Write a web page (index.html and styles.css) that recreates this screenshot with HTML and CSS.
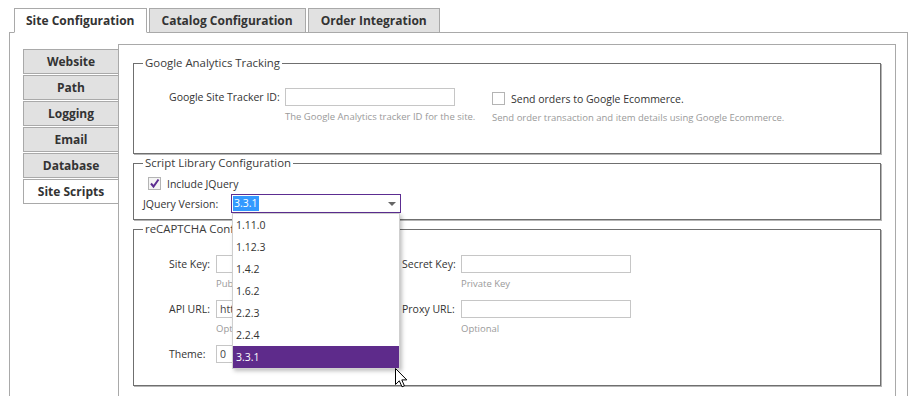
FILE: index.html
```html
<!DOCTYPE html>
<html lang="en">
<head>
    <meta charset="UTF-8">
    <title>Site Configuration</title>
    <link rel="stylesheet" href="styles.css">
</head>
<body>
    <div class="page">
        <div class="tabs">
            <div class="tab active">Site Configuration</div>
            <div class="tab">Catalog Configuration</div>
            <div class="tab">Order Integration</div>
        </div>
        <div class="panel">
            <div class="side-tabs">
                <div class="side-tab">Website</div>
                <div class="side-tab">Path</div>
                <div class="side-tab">Logging</div>
                <div class="side-tab">Email</div>
                <div class="side-tab">Database</div>
                <div class="side-tab active">Site Scripts</div>
            </div>
            <div class="content">
                <fieldset class="group group-ga">
                    <legend>Google Analytics Tracking</legend>
                    <div class="ga-grid">
                        <label class="field-label" for="tracker">Google Site Tracker ID:</label>
                        <div class="field">
                            <input type="text" id="tracker" class="text-input">
                            <div class="hint">The Google Analytics tracker ID for the site.</div>
                        </div>
                        <div class="field">
                            <div class="check-row"><span class="check"></span>Send orders to Google Ecommerce.</div>
                            <div class="hint hint-check">Send order transaction and item details using Google Ecommerce.</div>
                        </div>
                    </div>
                </fieldset>

                <fieldset class="group group-scripts">
                    <legend>Script Library Configuration</legend>
                    <div class="check-row include-row">
                        <span class="check checked">
                            <svg width="11" height="11" viewBox="0 0 11 11"><path d="M2 5.5 L4.5 8.5 L9.5 1.5" fill="none" stroke="#5c2d91" stroke-width="2"/></svg>
                        </span>Include JQuery
                    </div>
                    <div class="version-row">
                        <span class="version-label">JQuery Version:</span>
                        <div class="select-wrap">
                            <div class="select">
                                <span class="select-value">3.3.1</span>
                                <span class="select-arrow"></span>
                            </div>
                            <ul class="dropdown">
                                <li>1.11.0</li>
                                <li>1.12.3</li>
                                <li>1.4.2</li>
                                <li>1.6.2</li>
                                <li>2.2.3</li>
                                <li>2.2.4</li>
                                <li class="selected">3.3.1</li>
                            </ul>
                            <svg class="cursor" width="13" height="20" viewBox="0 0 13 20">
                                <path d="M0.5 0.5 L0.5 16.5 L4.3 12.8 L7 18.8 L9.4 17.8 L6.8 11.9 L11.8 11.9 Z" fill="#fff" stroke="#000" stroke-width="1" stroke-linejoin="round"/>
                            </svg>
                        </div>
                    </div>
                </fieldset>

                <fieldset class="group group-captcha">
                    <legend>reCAPTCHA Configuration</legend>
                    <div class="captcha-grid">
                        <label class="field-label" for="siteKey">Site Key:</label>
                        <div class="field">
                            <input type="text" id="siteKey" class="text-input">
                            <div class="hint">Public Key</div>
                        </div>
                        <label class="field-label" for="secretKey">Secret Key:</label>
                        <div class="field">
                            <input type="text" id="secretKey" class="text-input">
                            <div class="hint">Private Key</div>
                        </div>

                        <label class="field-label" for="apiUrl">API URL:</label>
                        <div class="field">
                            <input type="text" id="apiUrl" class="text-input" value="https://www.google.com/recaptcha/api.js">
                            <div class="hint">Optional</div>
                        </div>
                        <label class="field-label" for="proxyUrl">Proxy URL:</label>
                        <div class="field">
                            <input type="text" id="proxyUrl" class="text-input">
                            <div class="hint">Optional</div>
                        </div>

                        <label class="field-label" for="theme">Theme:</label>
                        <div class="field">
                            <input type="text" id="theme" class="text-input" value="0">
                        </div>
                    </div>
                </fieldset>
            </div>
        </div>
    </div>
</body>
</html>
```

FILE: styles.css
```css
body {
    margin: 0;
    font-family: "Open Sans", "Noto Sans", sans-serif;
    font-size: 11px;
    color: #333;
    background-color: #fff;
    overflow: hidden;
}
.page {
    padding: 8px 6px 0 9px;
}

/* top tabs */
.tabs {
    display: flex;
    gap: 2px;
    margin-left: 5px;
    margin-bottom: -1px;
    position: relative;
    z-index: 1;
}
.tab {
    height: 23px;
    line-height: 23px;
    padding: 0 12px;
    border: 1px solid #a9a9a9;
    background-color: #e1e1e1;
    font-weight: bold;
    font-size: 12px;
    color: #333;
}
.tab:first-child {
    padding: 0 11px;
}
.tab.active {
    background-color: #fff;
    border-bottom-color: #fff;
}

.panel {
    display: flex;
    height: 380px;
    border: 1px solid #a9a9a9;
    padding: 11px 11px 0 13px;
}

/* side tabs */
.side-tabs {
    flex: none;
    width: 96px;
    margin-top: 5px;
    margin-right: -1px;
    position: relative;
    z-index: 1;
}
.side-tab {
    height: 23px;
    line-height: 23px;
    margin-bottom: 1px;
    border: 1px solid #a9a9a9;
    background-color: #e1e1e1;
    text-align: center;
    font-weight: bold;
    font-size: 12px;
}
.side-tab.active {
    background-color: #fff;
}

.content {
    flex: 1;
    border: 1px solid #a9a9a9;
    border-bottom: none;
    padding: 10px 14px 0 14px;
}

/* fieldsets */
.group {
    margin: 0 0 1px;
    padding: 0 9px;
    border: 1px solid #6f6f6f;
    box-shadow: 1px 1px 0 #b5b5b5;
    min-width: 0;
}
.group legend {
    padding: 0 2px;
    font-size: 11.4px;
    line-height: 16px;
    color: #3a3a3a;
}

.field-label {
    line-height: 18px;
    font-size: 10.5px;
    white-space: nowrap;
}
.text-input {
    display: block;
    width: 170px;
    height: 18px;
    box-sizing: border-box;
    border: 1px solid #c6c6c6;
    padding: 0 3px;
    font-family: inherit;
    font-size: 10.5px;
    color: #444;
    outline: none;
}
.hint {
    margin-top: 4px;
    line-height: 14px;
    font-size: 9.5px;
    color: #9a9a9a;
    white-space: nowrap;
}
.check-row {
    display: flex;
    align-items: center;
    gap: 6px;
    height: 13px;
    font-size: 10.5px;
    white-space: nowrap;
}
.check {
    flex: none;
    width: 13px;
    height: 13px;
    box-sizing: border-box;
    border: 1px solid #b4b4b4;
    background-color: #fff;
    display: flex;
    align-items: center;
    justify-content: center;
}
.check.checked {
    background-color: #f4f4f4;
}

/* google analytics */
.ga-grid {
    display: grid;
    grid-template-columns: 116px 207px auto;
    padding: 17px 0 28px 26px;
}
.ga-grid .check-row {
    margin-top: 4px;
}
.hint-check {
    margin-top: 6px;
}

/* script library */
.group-scripts {
    padding-bottom: 6px;
}
.include-row {
    margin: 6px 0 4px 5px;
}
.version-row {
    display: flex;
    align-items: center;
    font-size: 10.5px;
}
.version-label {
    width: 88px;
}
.select-wrap {
    position: relative;
}
.select {
    display: flex;
    align-items: center;
    width: 170px;
    height: 19px;
    box-sizing: border-box;
    border: 1px solid #5c2d91;
    padding: 0 4px 0 1px;
}
.select-value {
    margin-right: auto;
    background-color: #3399ff;
    color: #fff;
    line-height: 15px;
    padding: 0 1px;
}
.select-arrow {
    width: 0;
    height: 0;
    border-left: 4px solid transparent;
    border-right: 4px solid transparent;
    border-top: 4px solid #666;
}
.dropdown {
    position: absolute;
    top: 19px;
    left: 1px;
    width: 166px;
    margin: 0;
    padding: 0;
    list-style: none;
    background-color: #fff;
    border: 1px solid #cfcfcf;
    box-shadow: 2px 2px 4px rgba(0,0,0,0.25);
    z-index: 5;
}
.dropdown li {
    height: 22px;
    line-height: 22px;
    padding-left: 3px;
    font-size: 10.5px;
    color: #333;
}
.dropdown li.selected {
    background-color: #5e2b8b;
    color: #fff;
}
.cursor {
    position: absolute;
    left: 164px;
    top: 174px;
    z-index: 6;
}

/* recaptcha */
.group-captcha {
    padding-bottom: 1px;
}
.captcha-grid {
    display: grid;
    grid-template-columns: 47px 186px 59px 170px;
    row-gap: 9px;
    padding: 18px 0 21px 26px;
}
```
